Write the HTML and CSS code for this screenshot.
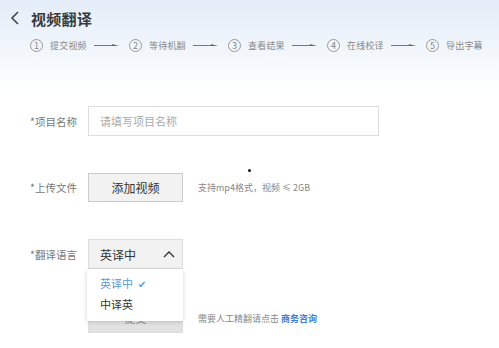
FILE: index.html
```html
<!DOCTYPE html>
<html lang="zh">
  <head>
    <meta charset="utf-8">
    <title>视频翻译</title>
    <link rel="stylesheet" href="styles.css">
  </head>
  <body>
    <div class="page">
      <div class="header">
        <div class="title-row">
          <svg class="back" width="10" height="14" viewBox="0 0 10 14"><path d="M8 1 L2 7 L8 13" fill="none" stroke="#444" stroke-width="1.6"/></svg>
          <span class="title">视频翻译</span>
        </div>
        <ul class="steps">
          <li><span class="num">1</span><span class="step-text">提交视频</span><svg class="arrow" width="26" height="6" viewBox="0 0 26 6"><path d="M0 3.5 H20" stroke="#777" stroke-width="1"/><path d="M18 2 L25 4 L18 4 Z" fill="#666"/></svg></li>
          <li><span class="num">2</span><span class="step-text">等待机翻</span><svg class="arrow" width="26" height="6" viewBox="0 0 26 6"><path d="M0 3.5 H20" stroke="#777" stroke-width="1"/><path d="M18 2 L25 4 L18 4 Z" fill="#666"/></svg></li>
          <li><span class="num">3</span><span class="step-text">查看结果</span><svg class="arrow" width="26" height="6" viewBox="0 0 26 6"><path d="M0 3.5 H20" stroke="#777" stroke-width="1"/><path d="M18 2 L25 4 L18 4 Z" fill="#666"/></svg></li>
          <li><span class="num">4</span><span class="step-text">在线校译</span><svg class="arrow" width="26" height="6" viewBox="0 0 26 6"><path d="M0 3.5 H20" stroke="#777" stroke-width="1"/><path d="M18 2 L25 4 L18 4 Z" fill="#666"/></svg></li>
          <li><span class="num">5</span><span class="step-text">导出字幕</span></li>
        </ul>
      </div>

      <div class="form">
        <div class="row">
          <label class="label">*项目名称</label>
          <div class="input">请填写项目名称</div>
        </div>

        <div class="row">
          <label class="label">*上传文件</label>
          <div class="btn">添加视频</div>
          <span class="hint">支持mp4格式，视频 ≤ 2GB</span>
          <span class="dot"></span>
        </div>

        <div class="row">
          <label class="label">*翻译语言</label>
          <div class="select-wrap">
            <div class="select">
              <span>英译中</span>
              <svg width="12" height="8" viewBox="0 0 12 8"><path d="M1 7 L6 2 L11 7" fill="none" stroke="#333" stroke-width="1.4"/></svg>
            </div>
            <ul class="menu">
              <li class="active">英译中 <span class="check">✔</span></li>
              <li>中译英</li>
            </ul>
          </div>
        </div>

        <div class="row submit-row">
          <div class="btn submit">提交</div>
          <span class="hint">需要人工精翻请点击 <a class="link" href="#">商务咨询</a></span>
        </div>
      </div>
    </div>
  </body>
</html>
```

FILE: styles.css
```css
body
{
	margin: 0;
	font-family: "Noto Sans CJK SC", "Liberation Sans", sans-serif;
	color: #333;
}
.page
{
	width: 499px;
	height: 348px;
	overflow: hidden;
	background: linear-gradient(to bottom, #e4edf9 0px, #f3f7fc 55px, #ffffff 90px);
}
.header
{
	padding: 8px 0 0 10px;
	height: 62px;
	box-sizing: border-box;
}
.title-row
{
	display: flex;
	align-items: center;
	height: 20px;
}
.back
{
	margin-right: 11px;
}
.title
{
	font-size: 15px;
	font-weight: bold;
	color: #3a3a3a;
	letter-spacing: 0.3px;
}
.steps
{
	list-style: none;
	margin: 9px 0 0 20px;
	padding: 0;
	display: flex;
	align-items: center;
	height: 16px;
}
.steps LI
{
	display: flex;
	align-items: center;
	flex-shrink: 0;
	width: 99px;
}
.steps LI:last-child
{
	width: auto;
}
.num
{
	width: 11px;
	height: 11px;
	border: 1px solid #999;
	border-radius: 50%;
	font-size: 9px;
	line-height: 11px;
	text-align: center;
	color: #888;
	margin-right: 7px;
}
.step-text
{
	font-size: 9px;
	color: #888;
	letter-spacing: 0.2px;
}
.arrow
{
	margin-left: 7px;
}
.form
{
	padding: 44px 0 0 30px;
}
.row
{
	display: flex;
	align-items: center;
	position: relative;
	margin-bottom: 37px;
}
.label
{
	width: 58px;
	font-size: 10.5px;
	color: #777;
}
.input
{
	width: 278px;
	height: 28px;
	border: 1px solid #ddd;
	padding-left: 11px;
	font-size: 11px;
	line-height: 28px;
	color: #aaa;
	background: #fff;
}
.btn
{
	width: 93px;
	height: 27px;
	border: 1px solid #ccc;
	background: #f2f2f2;
	font-size: 12px;
	line-height: 27px;
	text-align: center;
	color: #333;
}
.hint
{
	margin-left: 15px;
	font-size: 9px;
	color: #888;
}
.dot
{
	position: absolute;
	left: 218px;
	top: -4px;
	width: 3px;
	height: 3px;
	border-radius: 50%;
	background: #111;
}
.select-wrap
{
	position: relative;
	z-index: 2;
}
.select
{
	width: 75px;
	height: 28px;
	border: 1px solid #ddd;
	background: #f2f2f2;
	padding: 0 7px 0 11px;
	display: flex;
	align-items: center;
	justify-content: space-between;
	font-size: 12px;
	color: #333;
}
.menu
{
	position: absolute;
	left: -1px;
	top: 30px;
	width: 96px;
	height: 52px;
	margin: 0;
	padding: 0;
	list-style: none;
	background: #fff;
	box-shadow: 0 1px 4px rgba(0, 0, 0, 0.18);
}
.menu LI
{
	padding-left: 13px;
	font-size: 11px;
	height: 21px;
	line-height: 21px;
	color: #333;
}
.menu LI:first-child
{
	margin-top: 4px;
}
.menu LI.active
{
	color: #5a9ad8;
}
.check
{
	margin-left: 3px;
	font-size: 10px;
}
.submit-row
{
	margin-left: 58px;
	margin-top: -2px;
}
.submit
{
	height: 27px;
	background: #e2e2e2;
	border-color: #ddd;
	color: #999;
	font-size: 11px;
}
.link
{
	color: #3c7fd0;
	font-weight: bold;
	text-decoration: none;
}
```
